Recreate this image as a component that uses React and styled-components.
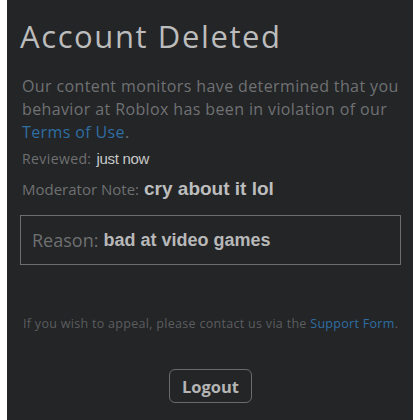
import React from "react";
import styled, { createGlobalStyle } from "styled-components";

const GlobalStyle = createGlobalStyle`
  html, body {
    margin: 0;
    padding: 0;
    background: #ffffff;
  }
`

const Panel = styled.div`
  margin: 0 7px;
  height: 420px;
  box-sizing: border-box;
  background: #232527;
  padding: 16px 12px 0 13px;
  font-family: "Open Sans", "Liberation Sans", sans-serif;
  display: flex;
  flex-direction: column;
  overflow: hidden;
`

const Title = styled.h1`
  margin: 0;
  font-size: 31px;
  font-weight: 400;
  line-height: 40px;
  color: #bcbcbc;
  letter-spacing: 1.6px;
`

const Message = styled.p`
  margin: 19px 0 0 2px;
  font-size: 16px;
  line-height: 23px;
  color: #707173;
  letter-spacing: 0.38px;
`

const Link = styled.a`
  color: #2f6ea3;
  text-decoration: none;
`

const Line = styled.div`
  margin: ${p => p.$top}px 0 0 2px;
  display: flex;
  align-items: baseline;
  gap: 5px;
  font-size: ${p => p.$size}px;
  color: #6f7071;
  letter-spacing: ${p => p.$spacing || 0}px;

  & > b {
    font-family: "Liberation Sans", Arial, sans-serif;
    font-weight: 700;
    font-size: ${p => p.$valueSize}px;
    color: #bdbdbd;
    letter-spacing: 0;
  }
`

const Plain = styled.span`
  font-family: "Liberation Sans", Arial, sans-serif;
  font-size: 15px;
  color: #c8c8c8;
  letter-spacing: -0.3px;
`

const ReasonBox = styled.div`
  margin-top: 15px;
  height: 50px;
  box-sizing: border-box;
  border: 1px solid #6d6e70;
  padding: 0 11px;
  display: flex;
  align-items: center;
  gap: 5px;
  font-size: 18px;
  color: #6f7071;

  & > b {
    font-family: "Liberation Sans", Arial, sans-serif;
    font-weight: 700;
    font-size: 18px;
    color: #b8b8b8;
  }
`

const Appeal = styled.p`
  margin: 50px 0 0 3px;
  font-size: 12.5px;
  color: #5c5d5f;
  letter-spacing: 0.3px;
`

const Footer = styled.div`
  margin-top: 37px;
  display: flex;
  justify-content: center;
`

const LogoutButton = styled.button`
  width: 83px;
  height: 34px;
  background: transparent;
  border: 1px solid #6a6b6d;
  border-radius: 6px;
  font-family: "Open Sans", "Liberation Sans", sans-serif;
  font-size: 16.5px;
  font-weight: 700;
  color: #b5b5b5;
  cursor: pointer;
`

export default function App() {
  return (
    <>
      <GlobalStyle />
      <Panel>
        <Title>Account Deleted</Title>
        <Message>
          Our content monitors have determined that you behavior at Roblox has been in violation of our{" "}
          <Link href="#">Terms of Use</Link>.
        </Message>
        <Line $top={5} $size={14} $spacing={0.4} $valueSize={14}>
          Reviewed: <Plain>just now</Plain>
        </Line>
        <Line $top={10} $size={15} $valueSize={19}>
          Moderator Note: <b>cry about it lol</b>
        </Line>
        <ReasonBox>
          Reason: <b>bad at video games</b>
        </ReasonBox>
        <Appeal>
          If you wish to appeal, please contact us via the <Link href="#">Support Form</Link>.
        </Appeal>
        <Footer>
          <LogoutButton>Logout</LogoutButton>
        </Footer>
      </Panel>
    </>
  )
}
